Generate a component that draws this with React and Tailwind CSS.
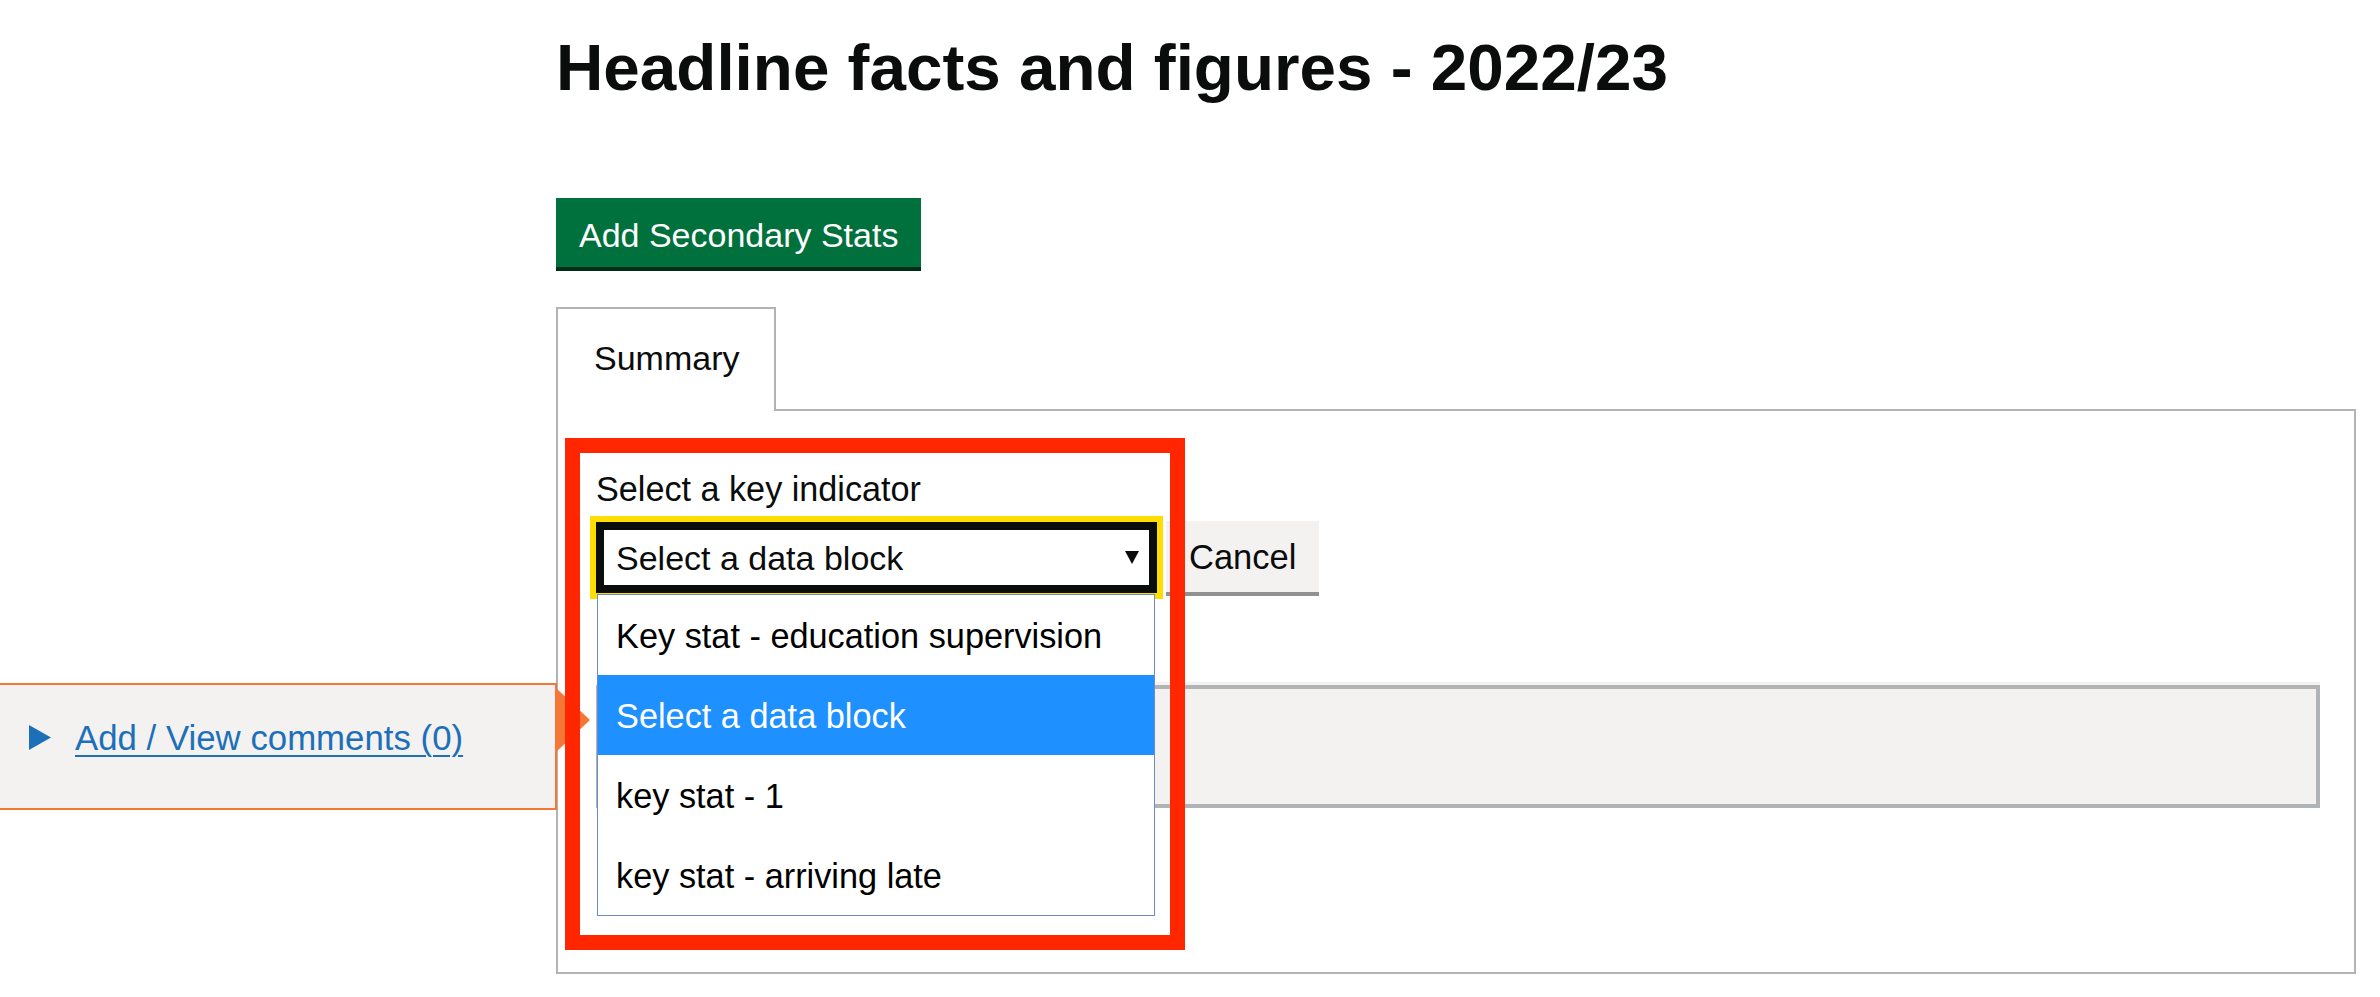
const options = [
    { label: 'Key stat - education supervision' },
    { label: 'Select a data block', active: true },
    { label: 'key stat - 1' },
    { label: 'key stat - arriving late' },
];

function CommentMarker() {
    return (
        <div className="absolute right-[calc(100%+39px)] top-[1px] h-[127px] w-[557px] border-y-2 border-r-2 border-[#f47738] bg-[#f3f2f1] pl-[29px] pt-[30px]">
            <div className="flex items-start">
                <svg width="22" height="25" viewBox="0 0 22 25" className="mt-[10px] shrink-0">
                    <polygon points="0,0 22,12.5 0,25" fill="#1d70b8" />
                </svg>
                <a href="#" className="ml-[24px] text-[34.8px] leading-[45px] text-[#1d70b8] underline decoration-2 underline-offset-[5px]">
                    Add / View comments (0)
                </a>
            </div>
            <svg width="35" height="66" viewBox="0 0 35 66" className="absolute left-full top-[2px]">
                <polygon points="0,0 35,33 0,66" fill="#f47738" />
            </svg>
        </div>
    );
}

function KeyStatSelect() {
    return (
        <div className="relative z-20 h-[71px] w-[561px]">
            <div className="flex h-full items-center justify-between border-[4px] border-[#0b0c0c] bg-white pl-[16px] pr-[14px] shadow-[inset_0_0_0_4px_#0b0c0c,0_0_0_6px_#ffdd00]">
                <span className="text-[34px] leading-[34px]">Select a data block</span>
                <svg width="14" height="13" viewBox="0 0 14 13">
                    <polygon points="0,0 14,0 7,13" fill="#0b0c0c" />
                </svg>
            </div>
            <ul className="absolute left-[1px] top-[72px] w-[558px] border border-[#6b8cc7] bg-white">
                {options.map((o) => (
                    <li
                        key={o.label}
                        className={
                            'flex h-[80px] items-center pl-[18px] pt-[2px] text-[34.3px] leading-[34px] ' +
                            (o.active ? 'bg-[#1e90ff] text-white' : 'text-black')
                        }
                    >
                        {o.label}
                    </li>
                ))}
            </ul>
        </div>
    );
}

export default function App() {
    return (
        <div className="relative h-[997px] w-[2380px] overflow-hidden bg-white font-['Liberation_Sans',Arial,sans-serif] text-[#0b0c0c]">
            <main className="ml-[556px] w-[1800px] pt-[32px]">
                <h1 className="text-[65.6px] font-bold leading-[72px]">Headline facts and figures - 2022/23</h1>

                <button className="mt-[94px] block h-[69px] bg-[#00703c] px-[23px] pb-[15px] pt-[20px] text-[34px] leading-[34px] text-white shadow-[0_4px_0_#002d18]">
                    Add Secondary Stats
                </button>

                <div className="mt-[40px]">
                    <ul className="flex">
                        <li className="relative z-10 -mb-[2px] h-[104px] w-[220px] border-2 border-b-0 border-[#b1b4b6] bg-white px-[36px] pt-[27px] text-[34px] leading-[45px]">
                            Summary
                        </li>
                    </ul>

                    <section className="h-[565px] border-2 border-[#b1b4b6] pl-[38px] pr-[34px] pt-[56px]">
                        <label className="mb-[10px] block text-[34.2px] leading-[45px]">Select a key indicator</label>
                        <div className="flex items-start">
                            <KeyStatSelect />
                            <button className="-mt-[1px] ml-[9px] h-[71px] bg-[#f3f2f1] px-[23px] text-[34.5px] leading-[34px] shadow-[0_4px_0_#929191]">
                                Cancel
                            </button>
                        </div>

                        <div className="relative mt-[89px] bg-[#f3f2f1] pt-[3px]">
                            <div className="h-[123px] border-[4px] border-[#b1b4b6]" />
                            <CommentMarker />
                        </div>
                    </section>
                </div>
            </main>

            {/* highlight annotation around the select */}
            <div className="pointer-events-none absolute left-[565px] top-[438px] z-30 h-[512px] w-[620px] border-[15px] border-[#ff2600]" />
        </div>
    );
}
